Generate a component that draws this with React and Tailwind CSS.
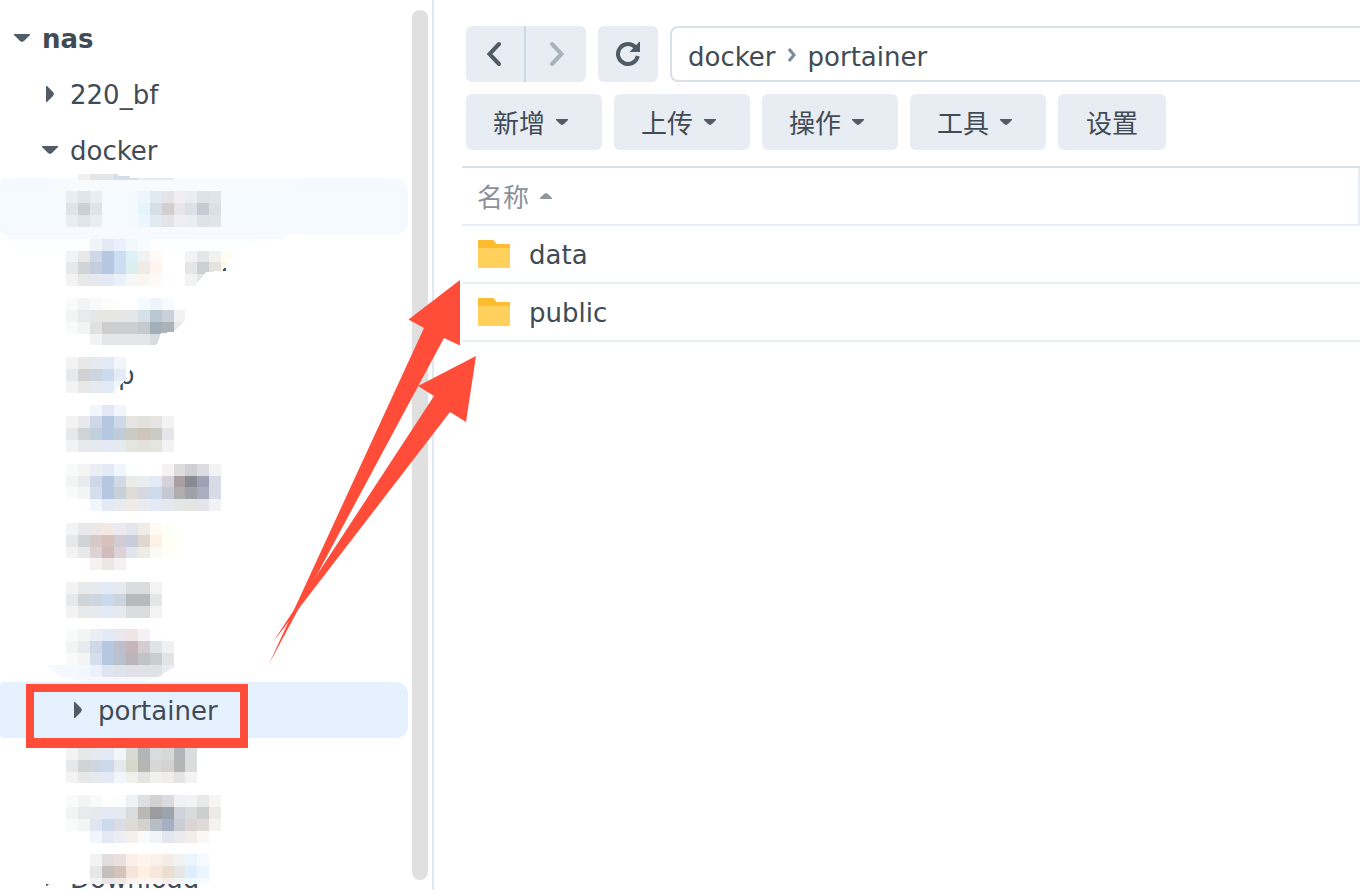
const treeItems = [
  { name: "nas", depth: 0, caret: "down", bold: true },
  { name: "220_bf", depth: 1, caret: "right" },
  { name: "docker", depth: 1, caret: "down" },
  { hidden: true, hover: true },
  { hidden: true },
  { hidden: true },
  { name: "p", masked: true },
  { hidden: true },
  { hidden: true },
  { hidden: true },
  { hidden: true },
  { hidden: true },
  { name: "portainer", depth: 2, caret: "right", active: true },
  { hidden: true },
  { hidden: true },
  { name: "Download", depth: 1, caret: "right" },
];

const toolbar = ["新增", "上传", "操作", "工具"];
const files = ["data", "public"];

// pixelated blocks over the private folder names, "-" is an empty cell
const columns = [66, 78, 90, 102, 114, 126, 138, 150, 162, 174, 185, 197, 209, 221];
const mosaic = [
  [191, 203, "e9eef2 e0e5e9 e9eef2 - - - edf6ff e1e9f1 e2e4e7 eeeef3 e9eef2 dde3e7 e0e5e9"],
  [203, 215, "dfe4e8 c9d0d6 dfe4e8 - - - e5f5ff d4dfe6 d3cfd1 e8e5e8 dbe1e5 c6cbd3 dbe1e5"],
  [215, 227, "e9eef2 e0e5e9 e9eef2 - - - edf6ff e1e9f1 e2e4e7 eeeef3 e9eef2 dde3e7 e0e5e9"],
  [239, 251, "- - eff4f9 e3eaf6 e9f0fb f1f9fd f7fcff"],
  [251, 262, "f3f3f3 e8e8e9 cfd8e8 b5c8e2 ccdff2 dff1f8 eff4f3 fffaf7 - - f3f3f3 e5e6e8 f1f1ef fffcf2"],
  [262, 274, "e7e8ea d1d4d6 c3cfde b5c8e2 ccdff2 ddeef1 f0ece5 fff5ee - - e5e6e8 cbd0d3 e4e3df fff7e6"],
  [274, 286, "f3f3f3 e8e8e9 e7e9ef e3eaf6 ebf1fa f4f8f7 faf6f1 fffaf7 - - f3f3f3 e5e6e8"],
  [298, 310, "f9fbfa f3f5f4 fafafa fffdfb fffefd - f4faff edf4fa f6fbff"],
  [310, 322, "f3f5f4 e8eaeb e7e7e7 e6e7e0 e7e7e7 e5e6e7 d7dfe8 b9c9d3 c9d2da f2f2f2"],
  [322, 334, "f9fbfa f3f5f4 e0e2e2 cdcecd cdcecf cccfd1 c5cacf a3afb9 abb3ba e7e8e9"],
  [334, 345, "- - f3f3f3 e5e6e7 e5e6e7 e5e6e7 e5e6e7 d9dbdf"],
  [357, 369, "f3f3f3 e8e8e9 e6e9ee e3eaf6 f1f6fd"],
  [369, 381, "e7e8ea d2d2d5 ced5df cddaed e4ebf7"],
  [381, 393, "f3f3f3 e8e8e9 e6e9ee e3eaf6"],
  [405, 416, "- - f1f6fd e3eaf6 f1f6fd"],
  [416, 428, "f3f3f3 e8e9ea cfd8e8 b5c8e2 cfd8e8 e5e4e0 e5e1dc e5e4e0 f3f3f3"],
  [428, 440, "e7e8ea d1d4d6 c2cfdc b5c8e2 c0ccd9 cbcac4 cec4b8 cbcac4 e5e6e9"],
  [440, 452, "f3f3f3 e8e9ea e6e9ee e3eaf6 e6e9ee e5e5e0 e5e1dc e5e5e0 f3f3f3"],
  [464, 476, "f9fbfa f3f5f4 ebeff5 e3eaf6 f1f5fc fdfeff - - f4f2f3 dddcdc d0cfd3 dcdce1 f3f3f5"],
  [476, 487, "f3f5f4 e8eaeb cfd8e8 b5c8e2 d1d9e6 ebebe8 e9edf0 e3eaf6 d4d2da a8a0a3 8b8b95 9fa2b7 d9dce6"],
  [487, 499, "f9fbfa f3f5f4 d5deed b5c8e2 c8d0da dedbd4 d6d9e1 cddaed c5c9d5 b0adaf a1a1a9 aaadc0 d9dce6"],
  [499, 511, "- - f1f6fd e3eaf6 e9ebf0 f0ebe6 e9ebf0 e3eaf6 e4e8ef e5e7e7 e5e5e5 e4e5eb f3f3f5"],
  [523, 535, "f3f3f3 e8e9ea ede8e8 f4e8e5 eceaef e3e5ec efebe7 fffaf4 fffffa fffffc"],
  [535, 547, "e7e8ea d1d4d6 d5cac8 d8c1ba d2cbd4 c8cddb e0d7d1 fdf1e6 fffff4 fffffb"],
  [547, 558, "f3f3f3 e8e9ea ded3d4 d2bcbd dcd3da e3e5ec efebe7 fcfaf5 fffffa fffffc"],
  [558, 570, "- - f5f1f3 ece6e7 f5f1f3"],
  [582, 594, "f3f3f3 e8e9ea e6e9ee e3eaf6 e6e9ee dadcdd dadcdd f3f3f3"],
  [594, 606, "e7e8ea d1d4d6 ced6e0 cbd9ec ccd4de b5b8bc b7babd e5e6e6"],
  [606, 618, "f3f3f3 e8e9ea e6e9ee e3eaf6 e6e9ee dadcdd dadcdd f3f3f3"],
  [629, 641, "f9fbfa f3f5f4 ebeff5 e3eaf6 eae8ee efe5e7 f4f1f2 fcfeff"],
  [641, 653, "f3f5f4 e8eaeb cfd8e8 b5c8e2 bebfcd c7b6b9 d4cdd1 dfe4e6 eef2f3"],
  [653, 665, "f9fbfa f3f5f4 d5deed b5c8e2 b9c1ce bdb5b9 c1c4c6 c8cdcf e1e5e5"],
  [665, 677, "f5f9ff f2f8ff ebf2fc dfe6f2 dde4ec dfe1e6 dfe1e6 dfe1e6 e9edf2"],
  [748, 760, "f3f3f3 e8e8e9 e6e9ee e3eaf6 f1f5fc dad9d5 b2b6b9 dadbdd d8d8d9 b2b6ba dbdcde"],
  [760, 772, "e7e8ea d1d4d6 ced6e0 cbd9ec e4e9ed d7d7ca b4b7b3 d7d7d8 d3d1d2 b3b5b7 dbdcde"],
  [772, 783, "f3f3f3 e8e8e9 e6e9ee e3eaf6 f1f5fc efefeb e4e5e3 f1f1f1 efeeed e4e4e4 f3f3f3"],
  [795, 807, "f9fbfa f3f5f4 f9fbfa - fbfdff edf2f6 dfdfe0 d2d2d4 dadbde eff1f5 f1f3f5 e9e9e9 f5f5f5"],
  [807, 819, "f3f5f4 e8eaeb e6e9ee e3eaf6 e4eaf2 d9dcdb bbb9b8 9a9ca1 9ca4b0 cfd2da d9dada cecece ebeae9"],
  [819, 831, "f9fbfa f3f5f4 dfe6f1 cddaed dadde5 dedbd6 d5d2cd b8bec6 a6b0c2 ccced6 dbd6d3 dfdbd8 f3f3f3"],
  [831, 843, "- - f1f6fd e3eaf6 eceef4 f5f0ec fafafa f1f3f8 e3e6ef ebebed f3edea faf8f7"],
  [854, 866, "- - f3f3f3 e2dedf eae1df faefe9 fff5ef fbf1eb f5ece7 f1f3f2 eaf5ff f5faff"],
  [866, 878, "- - e5e7e9 c5bfbe d4c4bb f5e6db fff0e1 f6e8dc ecdfd1 e5e7e6 dceeff ecf5ff"],
  [878, 884, "- - f3f3f3 e9e5e7 eee8e6 fbf2ee fff7f3 fbf4f0 f6eeea f3f5f4 f0f8ff f7fbff"],
];

const Caret = ({ direction }) => (
  <svg width="16" height="16" viewBox="0 0 16 16" className="shrink-0 fill-[#525c66]" aria-hidden="true">
    {direction === "down" ? <path d="M0 4h16v1l-6 6-2 1-2-1-6-6z" /> : <path d="M4 0h1l6 6 1 2-1 2-6 6H4z" />}
  </svg>
);

const SmallCaret = ({ up = false }) => (
  <svg width="12" height="6" viewBox="0 0 12 6" className="shrink-0" aria-hidden="true">
    {up ? <path d="M0 6V5l4-4 2-1 2 1 4 4v1z" fill="#92989f" /> : <path d="M0 0v1l4 4 2 1 2-1 4-4V0z" fill="#525c66" />}
  </svg>
);

const FolderIcon = () => (
  <svg width="32" height="28" viewBox="0 0 32 28" className="shrink-0" aria-hidden="true">
    <path d="M0 1Q0 0 1 0H15Q16 0 17 2L18.500 4H31Q32 4 32 5V12H0z" fill="#fdbb2f" />
    <path d="M0 8H32V27Q32 28 31 28H1Q0 28 0 27z" fill="#ffd15c" />
  </svg>
);

const TreeItem = ({ item }) => {
  if (item.hidden) {
    return <li className={item.hover ? "h-14 rounded-l-sm rounded-r-xl bg-[#f4faff]" : "h-14"} />;
  }

  const indent = item.masked ? "pl-[118px]" : ["pl-3.5", "pl-[42px]", "pl-[70px]"][item.depth];

  return (
    <li className={item.active ? "rounded-l-sm rounded-r-xl bg-[#e5f1ff]" : ""}>
      <button className={`flex h-14 w-full items-center gap-3 text-left ${indent} ${item.bold ? "font-bold" : ""}`}>
        {item.caret && <Caret direction={item.caret} />}
        <span className="pt-0.5">{item.name}</span>
      </button>
    </li>
  );
};

const Mosaic = () => (
  <svg width="300" height="890" className="pointer-events-none absolute left-0 top-0" shapeRendering="crispEdges" aria-hidden="true">
    {/* Smears around the highlighted rows */}
    <path d="M60 178H278L292 191H48z" fill="#f8fbfe" />
    <path d="M18 227H294L284 239H8L6 235z" fill="#f7fbff" />
    <path d="M6 239H280L260 244 240 248 232 251H18z" fill="#fdfeff" />
    <path d="M46 665H178L160 677 144 682H84L62 677z" fill="#f5f9ff" />
    <path d="M78 174H90V180H78z" fill="#f0f0f0" />
    <path d="M90 174H102V180H90z" fill="#e4e5e7" />
    <path d="M102 174H114V180H102z" fill="#e2e7ed" />
    <path d="M114 174H118V176H130V180H114z" fill="#d6dfe9" />
    <path d="M130 178H138V180H130z" fill="#d9dde6" />
    <path d="M138 178H174V180H138z" fill="#e7eaee" />
    <path d="M100 352H129L130 370 128 379 121 381 119 384 118 392H100z" fill="#fff" />
    <path d="M114 381H125L114 391z" fill="#f1f6fd" />
    <path d="M30 850H220V884H30z" fill="#fff" />
    {mosaic.map(([top, bottom, colors]) =>
      colors.split(" ").map((color, i) =>
        color === "-" ? null : (
          <rect
            key={`${top}-${i}`}
            x={columns[i]}
            y={top}
            width={(columns[i + 1] || 233) - columns[i]}
            height={bottom - top}
            fill={`#${color}`}
          />
        )
      )
    )}
    <path d="M240 249L226 265 221 271 206 272 203 276 196 284V288H245z" fill="#fff" />
    <path d="M223 271V269H224V268H226V271z" fill="#42537b" />
    <path d="M186 319L173 332 161 333 157 344 154 346H190z" fill="#fff" />
    <path d="M178 665L163 674 157 678H180z" fill="#fff" />
  </svg>
);

const Sidebar = () => (
  <aside className="relative flex h-full w-[434px] shrink-0 overflow-hidden border-r-2 border-[#e1e8ee]">
    <ul className="w-[408px] shrink-0 pt-2.5">
      {treeItems.map((item, i) => (
        <TreeItem key={i} item={item} />
      ))}
    </ul>
    <div className="my-2.5 ml-1 w-4 rounded-full bg-[#e0e0e0]" />
    <Mosaic />
  </aside>
);

const NavBar = () => (
  <nav className="flex gap-3 pl-1">
    <div className="flex overflow-hidden rounded-md bg-[#e8edf4]">
      <button aria-label="Back" className="flex h-14 w-15 items-center justify-center border-r-2 border-[#cdd8e2]">
        <svg width="24" height="28" viewBox="0 0 24 28" fill="none" stroke="#505b65" strokeWidth="4">
          <path d="M16 4L6.500 14 16 24" strokeLinecap="round" />
        </svg>
      </button>
      <button aria-label="Forward" className="flex h-14 w-15 items-center justify-center">
        <svg width="24" height="28" viewBox="0 0 24 28" fill="none" stroke="#aab2ba" strokeWidth="4">
          <path d="M8 4L17.500 14 8 24" strokeLinecap="round" />
        </svg>
      </button>
    </div>
    <button aria-label="Refresh" className="flex h-14 w-15 items-center justify-center rounded-md bg-[#e8edf4]">
      <svg width="24" height="24" viewBox="0 0 24 24" aria-hidden="true">
        <path d="M21.800 14A10 10 0 1 1 19.500 5.400" fill="none" stroke="#505b65" strokeWidth="4" />
        <path d="M24 0V10H14V9.500L23 0z" fill="#505b65" />
      </svg>
    </button>
    <div className="flex h-14 min-w-0 flex-1 items-center gap-3 rounded-l-lg border-2 border-r-0 border-[#d6e1ea] px-4 pt-0.5">
      <a href="#docker" className="pt-1">docker</a>
      <svg width="8" height="14" viewBox="0 0 8 14" fill="none" stroke="#7c8a97" strokeWidth="3" aria-hidden="true">
        <path d="M1 1L6 7 1 13" />
      </svg>
      <a href="#portainer" className="pt-1">portainer</a>
    </div>
  </nav>
);

const App = () => {
  return (
    <div className="relative flex h-screen w-full overflow-hidden bg-white font-['DejaVu_Sans','Noto_Sans_CJK_SC',sans-serif] text-[26px] leading-8 text-[#414b55]">
      <Sidebar />

      <main className="min-w-0 flex-1 pl-7 pt-[26px]">
        <NavBar />

        {/* Toolbar */}
        <div className="mt-3 flex gap-3 pl-1">
          {toolbar.map((label) => (
            <button key={label} className="flex h-14 w-[136px] items-center gap-[11px] rounded-md bg-[#e8edf4] pl-[27px]">
              <span className="pt-1">{label}</span>
              <SmallCaret />
            </button>
          ))}
          <button className="h-14 w-27 rounded-md bg-[#e8edf4] pt-1">设置</button>
        </div>

        {/* File list */}
        <table className="mt-4 w-full border-separate border-spacing-0 border-t-2 border-[#d6e1ea] text-left">
          <thead>
            <tr>
              <th className="border-b-2 border-r-2 border-[#e8edf4] p-0 font-normal text-[#8b9198]">
                <button className="flex h-14 items-center gap-[11px] pl-[15px]">
                  <span className="pt-1">名称</span>
                  <SmallCaret up />
                </button>
              </th>
            </tr>
          </thead>
          <tbody>
            {files.map((file) => (
              <tr key={file}>
                <td className="border-b-2 border-[#e8edf4] p-0">
                  <div className="flex h-14 items-center gap-[19px] pl-4">
                    <FolderIcon />
                    <span className="pt-0.5">{file}</span>
                  </div>
                </td>
              </tr>
            ))}
          </tbody>
        </table>
      </main>

      {/* Annotations */}
      <div className="pointer-events-none absolute left-[26px] top-[684px] h-16 w-[222px] border-8 border-b-10 border-[#ff4d3a]" />
      <svg width="480" height="670" className="pointer-events-none absolute left-0 top-0 fill-[#ff4d3a]" aria-hidden="true">
        <path d="M460 280L408.500 319.500 424 328 269 664 444 338 460 345.500z" />
        <path d="M476 356L418 386 434 396 273 642 450 412 466 422z" />
      </svg>
    </div>
  );
};

export default App;
